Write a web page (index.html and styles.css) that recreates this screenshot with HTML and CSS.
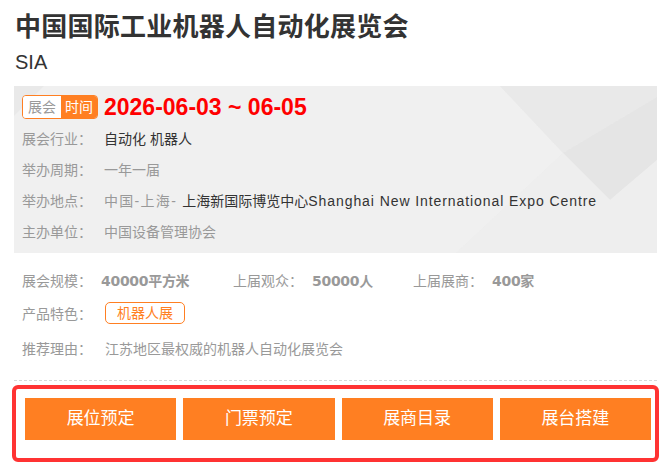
FILE: index.html
```html
<!DOCTYPE html>
<html lang="zh-CN">
<head>
<meta charset="utf-8">
<title>中国国际工业机器人自动化展览会</title>
<link rel="stylesheet" href="styles.css">
</head>
<body>
<div class="page">
  <h1 class="title">中国国际工业机器人自动化展览会</h1>
  <div class="subtitle">SIA</div>

  <div class="infobox">
    <div class="date-row">
      <span class="date-tag"><span class="tag-l">展会</span><span class="tag-r">时间</span></span>
      <span class="date">2026-06-03 ~ 06-05</span>
    </div>
    <div class="row"><span class="label">展会行业：</span><span class="val dark">自动化 机器人</span></div>
    <div class="row"><span class="label">举办周期：</span><span class="val">一年一届</span></div>
    <div class="row"><span class="label">举办地点：</span><span class="val"><span class="region">中国-上海- </span><span class="dark">上海新国际博览中心<span class="latin">Shanghai New International Expo Centre</span></span></span></div>
    <div class="row"><span class="label">主办单位：</span><span class="val">中国设备管理协会</span></div>
  </div>

  <div class="stats">
    <div class="stat-row">
      <span class="stat s1"><span class="slabel">展会规模：</span><b class="sval">40000平方米</b></span>
      <span class="stat s2"><span class="slabel">上届观众：</span><b class="sval">50000人</b></span>
      <span class="stat"><span class="slabel">上届展商：</span><b class="sval">400家</b></span>
    </div>
    <div class="feat-row">
      <span class="label2">产品特色：</span><span class="feat-tag">机器人展</span>
    </div>
    <div class="reason-row">
      <span class="label2">推荐理由：</span><span class="val">江苏地区最权威的机器人自动化展览会</span>
    </div>
  </div>

  <div class="divider"></div>

  <div class="actions">
    <a class="btn">展位预定</a>
    <a class="btn">门票预定</a>
    <a class="btn">展商目录</a>
    <a class="btn">展台搭建</a>
  </div>
</div>
</body>
</html>
```
FILE: styles.css
```css
* { box-sizing: border-box; }
html, body { margin: 0; padding: 0; background: #fff; }
body {
  font-family: "Liberation Sans", "Noto Sans CJK SC", sans-serif;
  color: #333;
}
.page { padding: 0 9px 0 14px; width: 666px; }
.title {
  margin: 0;
  padding: 9px 0 0 1px;
  height: 45px;
  font-size: 26px;
  line-height: 36px;
  font-weight: bold;
  letter-spacing: 0.25px;
  color: #333;
}
.subtitle {
  padding: 4px 0 0 1px;
  font-size: 20px;
  line-height: 26px;
  height: 41px;
  color: #333;
}
.infobox {
  height: 167px;
  padding: 9px 8px 0 8px;
  background-color: #ececec;
  background-image: url("data:image/svg+xml,%3Csvg xmlns='http://www.w3.org/2000/svg' viewBox='0 0 643 167' preserveAspectRatio='none'%3E%3Cpolygon points='0,0 486,0 549,67 442,167 0,167' fill='%23f0f0f0'/%3E%3Cpolygon points='0,0 30,0 0,30' fill='%23e9e9e9'/%3E%3Cpolygon points='486,0 643,0 643,11 549,67' fill='%23e9e9e9'/%3E%3Cpolygon points='549,67 643,11 643,74 596,114' fill='%23e5e5e5'/%3E%3Cpolygon points='549,67 596,114 643,74 643,167 442,167' fill='%23eeeeee'/%3E%3C/svg%3E");
  background-size: 100% 100%;
}
.date-row { display: flex; align-items: center; height: 24px; margin-bottom: 5px; }
.date-tag {
  display: flex;
  height: 24px;
  border: 1px solid #ff7f22;
  border-radius: 4px;
  overflow: hidden;
  font-size: 14px;
  line-height: 22px;
}
.tag-l { background: #fff; color: #999; padding: 0 5px 0 5px; }
.tag-r { background: #ff7f22; color: #fff; padding: 0 4px 0 4px; }
.date {
  margin-left: 6px;
  color: #ff0000;
  font-size: 23px;
  font-weight: bold;
  line-height: 24px;
}
.row { display: flex; height: 31px; line-height: 31px; font-size: 14px; }
.label { width: 82px; flex: none; color: #999; }
.val { color: #999; }
.dark { color: #333; }
.region { letter-spacing: 1.3px; }
.latin { letter-spacing: 0.92px; }

.stats { padding: 12px 0 0 8px; font-size: 14px; }
.stat-row { display: flex; height: 32px; line-height: 32px; }
.stat { display: flex; }
.s1 { width: 211px; }
.s2 { width: 180px; }
.slabel { color: #999; margin-right: 9px; }
.sval {
  color: #999;
  font-family: "DejaVu Sans", "Noto Sans CJK SC", sans-serif;
  font-weight: bold;
  font-size: 14px;
  letter-spacing: -0.3px;
}
.feat-row { display: flex; align-items: center; height: 32px; }
.label2 { width: 83px; flex: none; color: #999; }
.feat-tag {
  display: inline-block;
  height: 22px;
  line-height: 20px;
  padding: 0 11px;
  border: 1px solid #ff7f22;
  border-radius: 5px;
  color: #ff7f22;
  font-size: 14px;
}
.reason-row { display: flex; height: 32px; line-height: 32px; margin-top: 4px; }

.divider { margin-top: 15px; border-top: 1px dashed #d8d8d8; }

.actions {
  display: flex;
  gap: 7px;
  margin: 4px -2px 0 -2px;
  padding: 9px 4px 18px 9px;
  border: 4px solid #ff3333;
  border-radius: 6px;
}
.btn {
  flex: 1;
  height: 42px;
  line-height: 42px;
  background: #ff7f22;
  color: #fff;
  text-align: center;
  font-size: 17px;
  text-decoration: none;
}
```
